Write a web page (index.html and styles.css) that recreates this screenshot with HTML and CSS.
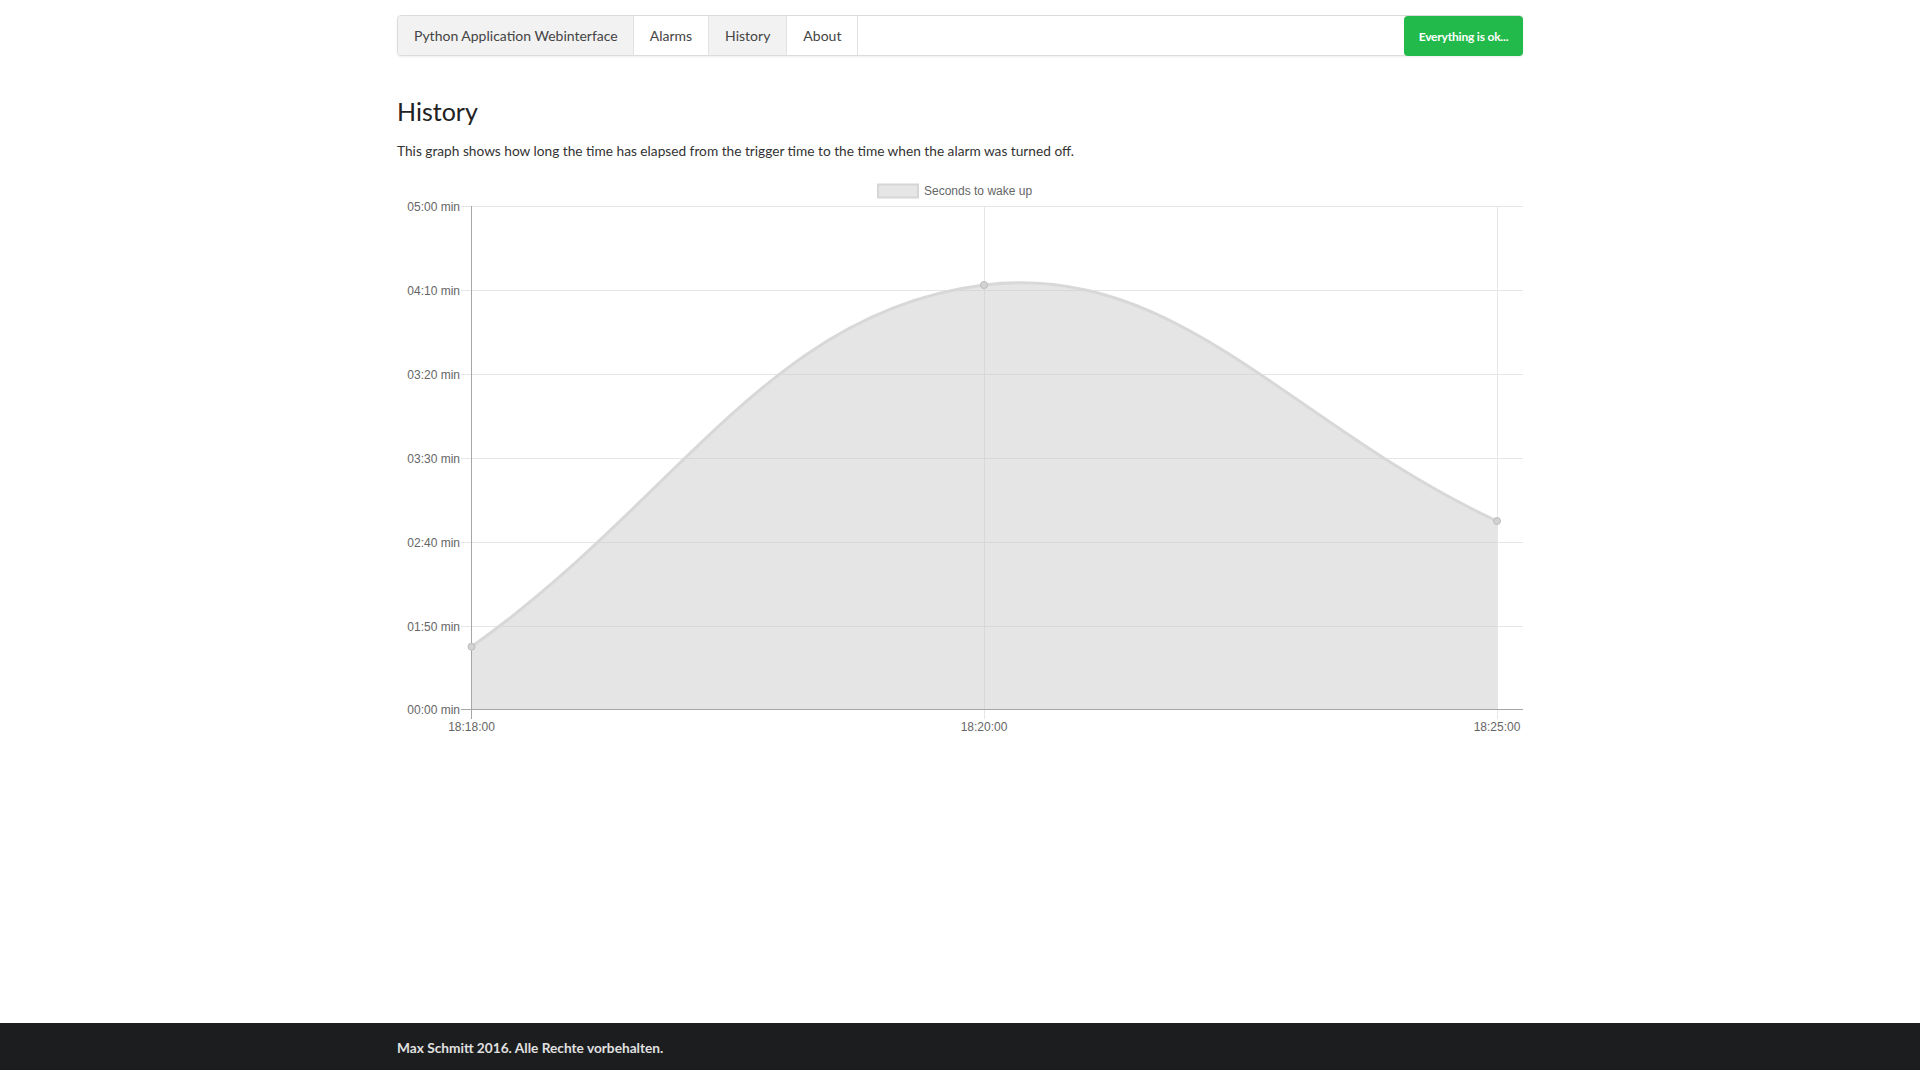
FILE: index.html
```html
<!DOCTYPE html>
<html lang="en">
<head>
<meta charset="utf-8">
<title>History - Python Application Webinterface</title>
<link rel="stylesheet" href="styles.css">
</head>
<body>
<div class="page">
  <div class="container">
    <nav class="navbar">
      <a class="brand" href="#">Python Application Webinterface</a>
      <a class="nav-item" href="#">Alarms</a>
      <a class="nav-item active" href="#">History</a>
      <a class="nav-item" href="#">About</a>
      <span class="status-btn">Everything is ok...</span>
    </nav>

    <h2 class="title">History</h2>
    <p class="lead">This graph shows how long the time has elapsed from the trigger time to the time when the alarm was turned off.</p>

    <svg class="chart" width="1126" height="570" viewBox="0 0 1126 570" xmlns="http://www.w3.org/2000/svg">
      <!-- legend -->
      <rect x="481" y="9.5" width="40" height="13" fill="#e6e6e6" stroke="#d6d6d6" stroke-width="2"/>
      <text class="lbl" x="527" y="20">Seconds to wake up</text>

      <!-- horizontal grid lines with ticks -->
      <g stroke="#e6e6e6" stroke-width="1">
        <line x1="64" y1="31.5" x2="1126" y2="31.5"/>
        <line x1="64" y1="115.5" x2="1126" y2="115.5"/>
        <line x1="64" y1="199.5" x2="1126" y2="199.5"/>
        <line x1="64" y1="283.5" x2="1126" y2="283.5"/>
        <line x1="64" y1="367.5" x2="1126" y2="367.5"/>
        <line x1="64" y1="451.5" x2="1126" y2="451.5"/>
        <line x1="587.5" y1="31" x2="587.5" y2="544"/>
        <line x1="1100.5" y1="31" x2="1100.5" y2="544"/>
      </g>

      <!-- data area -->
      <path d="M74.5,471.7 C279.4,327 371.3,136.4 587,110 C781.3,86.2 894.8,251.6 1100,346 L1100,534 L74.5,534 Z" fill="rgba(200,200,200,0.47)"/>
      <path d="M74.5,471.7 C279.4,327 371.3,136.4 587,110 C781.3,86.2 894.8,251.6 1100,346" fill="none" stroke="#d8d8d8" stroke-width="3"/>

      <!-- axes -->
      <g stroke="#a6a6a6" stroke-width="1">
        <line x1="74.5" y1="31" x2="74.5" y2="544"/>
        <line x1="64" y1="534.5" x2="1126" y2="534.5"/>
      </g>

      <!-- points -->
      <g fill="#d2d2d2" stroke="#bcbcbc" stroke-width="1">
        <circle cx="74.5" cy="471.7" r="3.5"/>
        <circle cx="587" cy="110" r="3.5"/>
        <circle cx="1100" cy="346" r="3.5"/>
      </g>

      <!-- y labels -->
      <g class="lbl" text-anchor="end">
        <text x="63" y="35.5">05:00 min</text>
        <text x="63" y="119.5">04:10 min</text>
        <text x="63" y="203.5">03:20 min</text>
        <text x="63" y="287.5">03:30 min</text>
        <text x="63" y="371.5">02:40 min</text>
        <text x="63" y="455.5">01:50 min</text>
        <text x="63" y="538.5">00:00 min</text>
      </g>

      <!-- x labels -->
      <g class="lbl" text-anchor="middle">
        <text x="74.5" y="556">18:18:00</text>
        <text x="587" y="556">18:20:00</text>
        <text x="1100" y="556">18:25:00</text>
      </g>
    </svg>
  </div>

  <footer class="footer">
    <div class="container">
      <span class="copy">Max Schmitt 2016. Alle Rechte vorbehalten.</span>
    </div>
  </footer>
</div>
</body>
</html>
```

FILE: styles.css
```css
html, body {
  margin: 0;
  padding: 0;
}

body {
  font-family: Lato, "Open Sans", "Liberation Sans", sans-serif;
  color: #333;
  background: #fff;
}

.page {
  min-height: 100vh;
  display: flex;
  flex-direction: column;
}

.container {
  width: 1126px;
  margin: 0 auto;
}

.navbar {
  margin-top: 15px;
  height: 39px;
  display: flex;
  align-items: stretch;
  border: 1px solid #dcdcdc;
  border-radius: 4px;
  box-shadow: 0 1px 2px rgba(0, 0, 0, 0.08);
  background: #fff;
}

.brand,
.nav-item {
  display: flex;
  align-items: center;
  font-size: 14px;
  color: #444;
  text-decoration: none;
  border-right: 1px solid #e2e2e2;
}

.brand {
  padding: 0 15px 0 16px;
  background: #f2f2f2;
  border-radius: 4px 0 0 4px;
}

.nav-item {
  padding: 0 16px;
}

.nav-item.active {
  background: #f2f2f2;
}

.status-btn {
  margin-left: auto;
  margin-right: -1px;
  margin-bottom: -1px;
  width: 119px;
  display: flex;
  align-items: center;
  justify-content: center;
  background: #22ba4a;
  color: #fff;
  font-weight: 700;
  font-size: 12px;
  border-radius: 4px;
  letter-spacing: -0.2px;
}

.title {
  font-size: 25px;
  font-weight: 400;
  line-height: 1.1;
  margin: 42px 0 15px;
  color: #222;
}

.lead {
  font-size: 13.7px;
  line-height: 20px;
  margin: 0 0 14px;
  color: #333;
}

.chart {
  display: block;
}

.lbl {
  font-family: "Liberation Sans", Arial, sans-serif;
  font-size: 12px;
  fill: #666;
}

.footer {
  margin-top: auto;
  height: 47px;
  background: #1c1d1f;
  display: flex;
  align-items: center;
}

.copy {
  font-size: 13.7px;
  font-weight: 700;
  color: #e0e0e0;
}
```
